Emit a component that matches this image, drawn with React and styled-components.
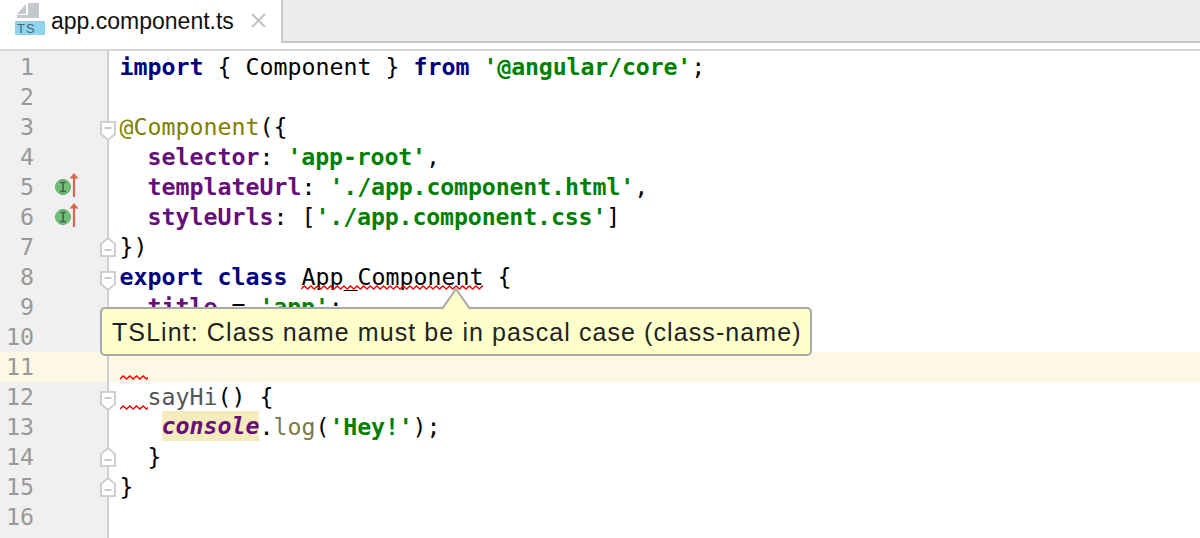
import styled, { createGlobalStyle } from "styled-components";

const GlobalStyle = createGlobalStyle`
  html, body {
    margin: 0;
    padding: 0;
    background: #fff;
  }
`;

const Page = styled.div`
  width: 1200px;
  height: 538px;
  overflow: hidden;
  background: #fff;
`;

const TabBar = styled.div`
  display: flex;
  align-items: flex-start;
  box-sizing: border-box;
  height: 51px;
  border-bottom: 2px solid #d6d6d6;
`;

const Tab = styled.div`
  display: flex;
  align-items: flex-start;
  width: 281px;
  flex: none;
  box-sizing: border-box;
  padding: 3px 0 0 15px;
`;

const TabFiller = styled.div`
  flex: 1;
  box-sizing: border-box;
  height: 43px;
  background: #ececec;
  border-left: 2px solid #c9c9c9;
  border-bottom: 2px solid #c9c9c9;
`;

const FileName = styled.span`
  margin: 3px 0 0 6px;
  font-family: "Liberation Sans", Arial, sans-serif;
  font-size: 23px;
  line-height: 30px;
  color: #111;
`;

const CloseIcon = styled.svg`
  margin: 10px 0 0 17px;
`;

const Editor = styled.div`
  display: flex;
  height: 487px;
`;

const Gutter = styled.div`
  width: 107px;
  flex: none;
  padding-top: 1px;
  background: #f0f0f0;
  border-right: 2px solid #d0d0d0;
`;

const GutterRow = styled.div`
  position: relative;
  height: 30px;
  display: flex;
  align-items: center;
  background: ${(p) => (p.$active ? "#fdf8e3" : "transparent")};
`;

const LineNumber = styled.span`
  width: 34px;
  text-align: right;
  line-height: 30px;
  font-family: "DejaVu Sans Mono", monospace;
  font-size: 23.25px;
  color: #999;
`;

const GutterMark = styled.svg`
  margin-left: 20px;
`;

const FoldMark = styled.svg`
  position: absolute;
  right: -9px;
  top: ${(p) => (p.$up ? 5 : 9)}px;
`;

const Code = styled.div`
  flex: 1;
  position: relative;
  padding-top: 1px;
`;

const Row = styled.div`
  height: 30px;
  padding-left: 10.5px;
  line-height: 30px;
  white-space: pre;
  position: relative;
  font-family: "DejaVu Sans Mono", monospace;
  font-size: 23.25px;
  color: #000;
  background: ${(p) => (p.$active ? "#fdf8e3" : "transparent")};
`;

const Keyword = styled.span`
  color: #000080;
  font-weight: bold;
`;

const Str = styled.span`
  color: #008000;
  font-weight: bold;
  letter-spacing: -0.15px;
`;

const Prop = styled.span`
  color: #660e7a;
  font-weight: bold;
`;

const Decorator = styled.span`
  color: #808000;
`;

const Method = styled.span`
  color: #7a7a43;
`;

const Fn = styled.span`
  color: #555;
`;

const Global = styled.span`
  display: inline-block;
  height: 30px;
  vertical-align: top;
  margin-top: -1px;
  color: #660e7a;
  font-weight: bold;
  font-style: italic;
  background: #f6ebbc;
`;

const Squiggled = styled.span`
  position: relative;
`;

const Wave = styled.svg`
  position: absolute;
  left: ${(p) => p.$left || 0}px;
  top: ${(p) => p.$top || 24}px;
`;

const Tooltip = styled.div`
  position: absolute;
  left: -9px;
  top: 256px;
  box-sizing: border-box;
  width: 712px;
  height: 49px;
  padding: 2px 0 0 10px;
  display: flex;
  align-items: center;
  font-family: "Liberation Sans", Arial, sans-serif;
  font-size: 25px;
  letter-spacing: 1.09px;
  white-space: nowrap;
  color: #222;
  background: #ffffcc;
  border: 2px solid #a8a8a8;
  border-radius: 5px;
`;

const TooltipArrow = styled.svg`
  position: absolute;
  left: 339px;
  top: -21px;
`;

function wavePath(width) {
  let d = "M0 4";
  for (let x = 0; x < width; x += 6.6) {
    d += ` L${x + 3.3} 1 L${x + 6.6} 4`;
  }
  return d;
}

function WaveLine({ width, left, top }) {
  return (
    <Wave $left={left} $top={top} width={width} height={5} viewBox={`0 0 ${width} 5`} fill="none">
      <path d={wavePath(width)} stroke="#f00000" strokeWidth="1.3" />
    </Wave>
  );
}

function Implement() {
  return (
    <GutterMark width="30" height="30" viewBox="0 0 30 30">
      <circle cx="9" cy="15" r="7.5" fill="#6fbf78" stroke="#5fae68" strokeWidth="1" />
      <path d="M6 10.5h6M6 19.5h6M9 10.5v9" stroke="#4f5f51" strokeWidth="1.7" fill="none" />
      <path d="M20 25V4" stroke="#d9644f" strokeWidth="2.2" fill="none" />
      <path d="M15.5 6.5L20 1l4.5 5.5z" fill="#d9644f" />
    </GutterMark>
  );
}

function Fold({ up }) {
  return (
    <FoldMark $up={up} width="16" height="20" viewBox="0 0 16 20">
      <path
        d={up ? "M1 19V7l7-6 7 6v12z" : "M1 1h14v12l-7 6-7-6z"}
        fill="#fff"
        stroke="#cfcfcf"
        strokeWidth="2"
      />
      <path d={up ? "M4.5 13h7" : "M4.5 7h7"} stroke="#bdbdbd" strokeWidth="1.6" />
    </FoldMark>
  );
}

function TsFileIcon() {
  return (
    <svg width="30" height="32" viewBox="0 0 30 32">
      <path d="M2 11L11 1v10z" fill="#c4c8cc" />
      <path d="M13 0h11v15H2v-3h11z" fill="#c4c8cc" />
      <rect x="0" y="18" width="30" height="14" fill="#8fd3ec" />
      <text x="2" y="30" fontFamily="Liberation Sans" fontSize="13" letterSpacing="1" fill="#4a6672">
        TS
      </text>
    </svg>
  );
}

const gutterMarks = {
  3: "down",
  5: "impl",
  6: "impl",
  7: "up",
  8: "down",
  12: "down",
  14: "up",
  15: "up",
};

const lineNumbers = Array.from({ length: 16 }, (_, i) => i + 1);

export default function App() {
  return (
    <Page>
      <GlobalStyle />
      <TabBar>
        <Tab>
          <TsFileIcon />
          <FileName>app.component.ts</FileName>
          <CloseIcon width="15" height="15" viewBox="0 0 15 15">
            <path d="M1 1l13 13M14 1L1 14" stroke="#c4c4c4" strokeWidth="2" />
          </CloseIcon>
        </Tab>
        <TabFiller />
      </TabBar>
      <Editor>
        <Gutter>
          {lineNumbers.map((n) => (
            <GutterRow key={n} $active={n === 11}>
              <LineNumber>{n}</LineNumber>
              {gutterMarks[n] === "impl" && <Implement />}
              {gutterMarks[n] === "down" && <Fold />}
              {gutterMarks[n] === "up" && <Fold up />}
            </GutterRow>
          ))}
        </Gutter>
        <Code>
          <Row>
            <Keyword>import</Keyword> {"{ Component } "}
            <Keyword>from</Keyword> <Str>'@angular/core'</Str>;
          </Row>
          <Row />
          <Row>
            <Decorator>@Component</Decorator>
            {"({"}
          </Row>
          <Row>
            {"  "}
            <Prop>selector</Prop>: <Str>'app-root'</Str>,
          </Row>
          <Row>
            {"  "}
            <Prop>templateUrl</Prop>: <Str>'./app.component.html'</Str>,
          </Row>
          <Row>
            {"  "}
            <Prop>styleUrls</Prop>: [<Str>'./app.component.css'</Str>]
          </Row>
          <Row>{"})"}</Row>
          <Row>
            <Keyword>export class</Keyword>{" "}
            <Squiggled>
              App_Component
              <WaveLine width={182} left={0} top={22} />
            </Squiggled>{" "}
            {"{"}
          </Row>
          <Row>
            {"  "}
            <Prop>title</Prop> = <Str>'app'</Str>;
          </Row>
          <Row />
          <Row $active>
            <WaveLine width={28} left={11} top={23} />
          </Row>
          <Row>
            <WaveLine width={28} left={11} top={23} />
            {"  "}
            <Fn>sayHi</Fn>
            {"() {"}
          </Row>
          <Row>
            {"   "}
            <Global>console</Global>.<Method>log</Method>(<Str>'Hey!'</Str>);
          </Row>
          <Row>{"  }"}</Row>
          <Row>{"}"}</Row>
          <Row />
          <Tooltip>
            <TooltipArrow width="30" height="22" viewBox="0 0 30 22">
              <path d="M1 21L15 1l14 20" fill="#ffffcc" stroke="#a8a8a8" strokeWidth="2" />
            </TooltipArrow>
            TSLint: Class name must be in pascal case (class-name)
          </Tooltip>
        </Code>
      </Editor>
    </Page>
  );
}
